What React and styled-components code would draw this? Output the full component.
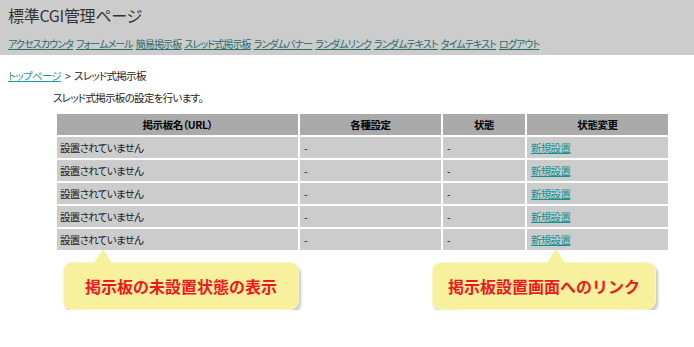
import React from "react";
import styled, { createGlobalStyle } from "styled-components";

const GlobalStyle = createGlobalStyle`
  body {
    margin: 0;
    background: #fff;
    color: #222;
    font-family: "Noto Sans CJK JP", "Liberation Sans", sans-serif;
    font-feature-settings: "palt";
  }
`;

const Header = styled.header`
  background: #ccc;
  height: 55px;
  box-sizing: border-box;
  padding: 5px 8px 0;
  h1 {
    margin: 0;
    font-size: 16px;
    font-weight: normal;
    line-height: 20px;
    color: #333;
    letter-spacing: -0.3px;
  }
`;

const Nav = styled.nav`
  display: flex;
  gap: 3px;
  margin-top: 12px;
  font-size: 10px;
  line-height: 14px;
  letter-spacing: -0.9px;
  a {
    color: #2a6b6b;
    text-decoration: underline;
  }
`;

const Main = styled.main`
  padding: 0 8px;
  font-size: 10.5px;
  line-height: 14px;
  letter-spacing: -0.7px;
`;

const Crumbs = styled.div`
  margin-top: 14px;
  a {
    color: #1a9a9a;
  }
`;

const Sep = styled.span`
  margin: 0 4px;
`;

const Lead = styled.p`
  margin: 8px 0 0 45px;
`;

const Table = styled.table`
  margin: 7px 0 0 47px;
  border-collapse: separate;
  border-spacing: 2px;
  background: #fff;
  th,
  td {
    height: 21px;
    padding: 0 4px;
    box-sizing: border-box;
    font-size: 10.5px;
  }
  th {
    background: #aaa;
    font-weight: bold;
    color: #000;
    text-align: center;
    letter-spacing: -0.4px;
  }
  td {
    background: #ccc;
    color: #222;
  }
  td:first-child {
    padding-left: 3px;
  }
  a {
    color: #1a9090;
  }
`;

const Callouts = styled.div`
  display: flex;
  margin: 10px 0 0 55px;
  letter-spacing: 0;
`;

const Callout = styled.div`
  position: relative;
  width: ${(p) => p.$w}px;
  margin-left: ${(p) => p.$ml}px;
  height: 48px;
  box-sizing: border-box;
  border-radius: 9px;
  background: #f7f09c;
  border: 1px solid #fbf6c6;
  box-shadow: 2px 3px 3px rgba(0, 0, 0, 0.22);
  display: flex;
  align-items: center;
  justify-content: center;
  color: #f01820;
  font-size: 16px;
  font-weight: bold;
  font-feature-settings: normal;
  &::before {
    content: "";
    position: absolute;
    top: -14px;
    left: ${(p) => p.$tip - 9}px;
    border-left: 9px solid transparent;
    border-right: 9px solid transparent;
    border-bottom: 14px solid #f7f09c;
  }
`;

const navItems = [
  "アクセスカウンタ",
  "フォームメール",
  "簡易掲示板",
  "スレッド式掲示板",
  "ランダムバナー",
  "ランダムリンク",
  "ランダムテキスト",
  "タイムテキスト",
  "ログアウト",
];

const rows = [1, 2, 3, 4, 5];

const App = () => (
  <>
    <GlobalStyle />
    <Header>
      <h1>標準CGI管理ページ</h1>
      <Nav>
        {navItems.map((n) => (
          <a key={n} href="#">
            {n}
          </a>
        ))}
      </Nav>
    </Header>
    <Main>
      <Crumbs>
        <a href="#">トップページ</a>
        <Sep>&gt;</Sep>
        スレッド式掲示板
      </Crumbs>
      <Lead>スレッド式掲示板の設定を行います。</Lead>
      <Table>
        <colgroup>
          <col style={{ width: 241 }} />
          <col style={{ width: 141 }} />
          <col style={{ width: 82 }} />
          <col style={{ width: 141 }} />
        </colgroup>
        <thead>
          <tr>
            <th>掲示板名（URL）</th>
            <th>各種設定</th>
            <th>状態</th>
            <th>状態変更</th>
          </tr>
        </thead>
        <tbody>
          {rows.map((r) => (
            <tr key={r}>
              <td>設置されていません</td>
              <td>-</td>
              <td>-</td>
              <td>
                <a href="#">新規設置</a>
              </td>
            </tr>
          ))}
        </tbody>
      </Table>
      <Callouts>
        <Callout $w={236} $ml={0} $tip={39}>
          掲示板の未設置状態の表示
        </Callout>
        <Callout $w={224} $ml={133} $tip={123}>
          掲示板設置画面へのリンク
        </Callout>
      </Callouts>
    </Main>
  </>
);

export default App;
